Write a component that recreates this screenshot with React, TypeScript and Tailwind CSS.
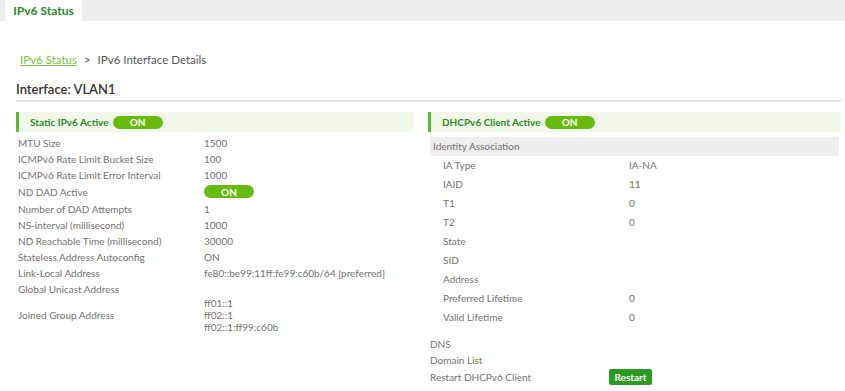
const font = { fontFamily: "'Lato', 'Open Sans', sans-serif" };

function Toggle() {
  return (
    <span className="inline-flex h-[13px] w-[50px] items-center justify-center rounded-full bg-[#66bb10] text-[10px] font-bold leading-none text-white">
      ON
    </span>
  );
}

function SectionHeader({ title }: { title: string }) {
  return (
    <div className="flex h-[20px] items-center gap-[4px] border-l-[3px] border-[#5cb82e] bg-[#f1f8ea] pl-[11px]">
      <span className="text-[10px] font-bold text-[#2d8a1f]">{title}</span>
      <Toggle />
    </div>
  );
}

const staticRows: [string, React.ReactNode][] = [
  ["MTU Size", "1500"],
  ["ICMPv6 Rate Limit Bucket Size", "100"],
  ["ICMPv6 Rate Limit Error Interval", "1000"],
];

const staticRows2: [string, string][] = [
  ["Number of DAD Attempts", "1"],
  ["NS-interval (millisecond)", "1000"],
  ["ND Reachable Time (millisecond)", "30000"],
  ["Stateless Address Autoconfig", "ON"],
  ["Link-Local Address", "fe80::be99:11ff:fe99:c60b/64 [preferred]"],
  ["Global Unicast Address", ""],
];

const iaRows: [string, string][] = [
  ["IA Type", "IA-NA"],
  ["IAID", "11"],
  ["T1", "0"],
  ["T2", "0"],
  ["State", ""],
  ["SID", ""],
  ["Address", ""],
  ["Preferred Lifetime", "0"],
  ["Valid Lifetime", "0"],
];

function Row({ label, value, h = "h-[16px]" }: { label: string; value: React.ReactNode; h?: string }) {
  return (
    <div className={`flex items-center ${h}`}>
      <div className="w-[186px] shrink-0">{label}</div>
      <div>{value}</div>
    </div>
  );
}

export default function App() {
  return (
    <div className="h-[391px] w-[845px] overflow-hidden bg-white text-[#727272]" style={font}>
      {/* Tab bar */}
      <div className="flex h-[21px] bg-[#eeeeee] pl-[5px]">
        <div className="flex w-[77px] items-center justify-center bg-white text-[12px] font-bold text-[#1f8a1f]">
          IPv6 Status
        </div>
      </div>

      <div className="px-[16px] pr-[4px]">
        {/* Breadcrumb */}
        <div className="mt-[30px] flex h-[18px] items-center pl-[4px] text-[11.5px]">
          <span className="text-[#7dc142] underline">IPv6 Status</span>
          <span className="mx-[7px] text-[#555]">&gt;</span>
          <span className="text-[#555]">IPv6 Interface Details</span>
        </div>

        {/* Interface title */}
        <div className="mt-[11px] flex h-[20px] items-center text-[13px] font-semibold text-[#333]">
          Interface: VLAN1
        </div>
        <div className="h-[2px] bg-[#dddddd]" />

        <div className="mt-[10px] flex gap-[15px] text-[10px]">
          {/* Left column */}
          <div className="w-[397px] shrink-0">
            <SectionHeader title="Static IPv6 Active" />
            <div className="mt-[3px] pl-[2px]">
              {staticRows.map(([l, v]) => (
                <Row key={l} label={l} value={v} />
              ))}
              <Row label="ND DAD Active" value={<Toggle />} h="h-[18px]" />
              {staticRows2.map(([l, v]) => (
                <Row key={l} label={l} value={v} />
              ))}
              <div className="flex items-center">
                <div className="w-[186px] shrink-0">Joined Group Address</div>
                <div className="leading-[12px]">
                  <div>ff01::1</div>
                  <div>ff02::1</div>
                  <div>ff02::1:ff99:c60b</div>
                </div>
              </div>
            </div>
          </div>

          {/* Right column */}
          <div className="flex-1">
            <SectionHeader title="DHCPv6 Client Active" />
            <div className="mx-[2px] mt-[5px] flex h-[19px] items-center bg-[#eeeeee] pl-[3px]">
              Identity Association
            </div>
            <div className="pl-[15px]">
              {iaRows.map(([l, v]) => (
                <Row key={l} label={l} value={v} h="h-[19px]" />
              ))}
            </div>
            <div className="mt-[9px] pl-[2px]">
              <Row label="DNS" value="" />
              <Row label="Domain List" value="" />
              <div className="mt-[1px] flex h-[16px] items-center">
                <div className="w-[179px] shrink-0">Restart DHCPv6 Client</div>
                <span className="flex h-[16px] w-[43px] items-center justify-center rounded-[2px] bg-[#2a9a22] text-[10px] font-bold text-white">
                  Restart
                </span>
              </div>
            </div>
          </div>
        </div>
      </div>
    </div>
  );
}
